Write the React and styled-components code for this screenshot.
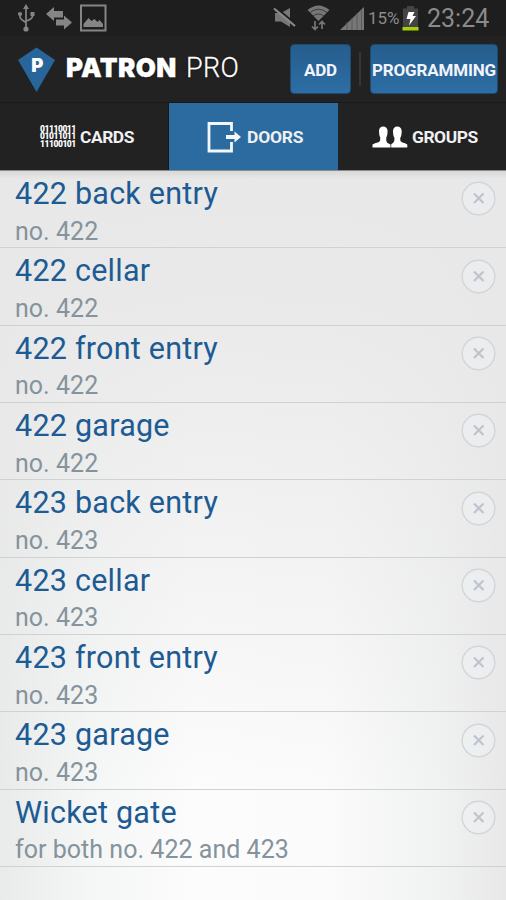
import React from 'react';
import styled, { createGlobalStyle } from 'styled-components';

const Global = createGlobalStyle`
  * { box-sizing: border-box; }
  body { margin: 0; background: #222; font-family: Roboto, "Liberation Sans", sans-serif; }
`;

const Screen = styled.div`
  width: 506px;
  height: 900px;
  display: flex;
  flex-direction: column;
  overflow: hidden;
`;

const StatusBar = styled.div`
  height: 36px;
  flex: none;
  background: #1e1e1e;
  display: flex;
  justify-content: space-between;
`;

const StatusIcons = styled.svg`
  display: block;
  flex: none;
`;

const StatusRight = styled.div`
  display: flex;
  height: 36px;
  align-items: center;
  color: #8b8b8b;
`;

const Percent = styled.span`
  width: 34px;
  font-size: 17px;
  letter-spacing: -0.1px;
  line-height: 36px;
`;

const Clock = styled.span`
  width: 86px;
  padding: 1px 0 0 7px;
  font-size: 25px;
  line-height: 36px;
  white-space: nowrap;
`;

const Header = styled.header`
  height: 67px;
  flex: none;
  background: #222;
  border-bottom: 1px solid #191919;
  display: flex;
  align-items: flex-start;
`;

const Logo = styled.svg`
  width: 40px;
  height: 46px;
  margin: 11px 10px 0 16px;
`;

const Title = styled.h1`
  margin: 0;
  width: 224px;
  display: flex;
  color: #fff;
  line-height: 64px;
  font-weight: 300;
  text-shadow: 0 0 2px #000;
`;

const Strong = styled.span`
  width: 120px;
  font-family: Inter, sans-serif;
  font-weight: 900;
  font-size: 26px;
  letter-spacing: 0.4px;
  -webkit-text-stroke: 0.4px #fff;
`;

const Light = styled.span`
  font-family: Roboto, sans-serif;
  font-weight: 300;
  font-size: 27px;
  line-height: 65px;
  letter-spacing: 0.3px;
  -webkit-text-stroke: 0.3px #fff;
`;

const Button = styled.button`
  width: ${(p) => p.$width}px;
  height: 50px;
  margin: 8px 0 0;
  padding: 2px 0 0;
  border: 1px solid #1d4a70;
  border-radius: 4px;
  background: linear-gradient(#265d8d, #2d6ea5);
  color: #f1f4fb;
  font: 700 17px Roboto, sans-serif;
  letter-spacing: -0.15px;
  white-space: nowrap;
  display: flex;
  align-items: center;
  justify-content: center;
`;

const Divider = styled.div`
  width: 2px;
  height: 34px;
  margin: 16px 9px 0 8px;
  background: #363636;
`;

const Tabs = styled.nav`
  height: 67px;
  flex: none;
  background: #222;
  display: grid;
  grid-template-columns: 169px 169px 168px;
`;

const Tab = styled.div`
  display: flex;
  align-items: center;
  padding-left: ${(p) => p.$inset}px;
  padding-top: 1px;
  gap: ${(p) => p.$gap}px;
  background: ${(p) => (p.$active ? '#2c6ba0' : '#222')};
  box-shadow: ${(p) => (p.$active ? '-1px 0 #191919' : 'none')};
  color: #f0f0f2;
  font-weight: 700;
  font-size: 17.4px;
  letter-spacing: ${(p) => p.$spacing}px;
`;

const Bits = styled.span`
  width: 36px;
  height: 23px;
  font: 900 8.5px/7.6px Roboto, sans-serif;
  letter-spacing: -0.45px;
  color: #fff;
  white-space: pre;
`;

const List = styled.main`
  flex: 1;
  border-top: 1px solid #8c8c8e;
  background:
    linear-gradient(rgba(0, 0, 0, 0.07), transparent 8px),
    linear-gradient(#e8e8e8 0%, rgba(232, 232, 232, 0.92) 18%, rgba(235, 235, 235, 0) 85%),
    linear-gradient(90deg, #e9eaea 0%, #f5f6f6 18%, #fcfcfc 38%, #fbfbfb 65%, #f1f2f2 86%, #e8e8e8 100%);
`;

const Row = styled.div`
  height: 77.33px;
  padding: 0 10px 0 15px;
  border-bottom: 1px solid #cfd1d2;
  display: flex;
  justify-content: space-between;
`;

const Name = styled.div`
  height: 43.6px;
  color: #1c5b93;
  font-size: 30.5px;
  line-height: 46px;
  letter-spacing: 0.24px;
  white-space: nowrap;
`;

const Detail = styled.div`
  height: 32px;
  color: #85939c;
  font-size: 25px;
  line-height: 34px;
  letter-spacing: 0.03px;
  white-space: nowrap;
`;

const Remove = styled.svg`
  width: 35px;
  height: 35px;
  margin-top: 10.3px;
`;

const doors = [
  ['422 back entry', 'no. 422'],
  ['422 cellar', 'no. 422'],
  ['422 front entry', 'no. 422'],
  ['422 garage', 'no. 422'],
  ['423 back entry', 'no. 423'],
  ['423 cellar', 'no. 423'],
  ['423 front entry', 'no. 423'],
  ['423 garage', 'no. 423'],
  ['Wicket gate', 'for both no. 422 and 423'],
];

const LeftIcons = () => (
  <StatusIcons width="120" height="36" viewBox="0 0 120 36">
    <g fill="none" stroke="#858585" strokeWidth="1.7">
      <path d="M26 7v21M20 13v4q0 2 6 5.500M32.500 13v3q0 3-6.500 5" />
    </g>
    <g fill="#858585">
      <path d="M26 4l3 5h-6z" />
      <circle cx="26" cy="29" r="2.600" />
      <circle cx="20" cy="14" r="2.100" />
      <path d="M30.500 12h4v4h-4z" />
      <path d="M46 14l8-7v4h9v6.500h-9v3.500z" />
      <path d="M72 22.500l-8-7v4h-8v6h8v4z" />
      <path d="M83.500 27v-3l5-6 3 3 3-2 3 3 2-2 3.500 4v3z" />
    </g>
    <path d="M81 5.500h24.500v25H81z" fill="none" stroke="#858585" strokeWidth="2" />
  </StatusIcons>
);

const SignalIcons = () => (
  <StatusIcons width="96" height="36" viewBox="272 0 96 36">
    <path d="M275 13h6l9-5v19l-9-5.500h-6z" fill="#777" />
    <path d="M275 7l22 18" stroke="#1e1e1e" strokeWidth="2" />
    <path d="M274 8.500l21 17.500" stroke="#8a8a8a" strokeWidth="2.200" />
    <path d="M307.500 10q11-9 22 0L318.500 21z" fill="#767676" />
    <path d="M310 12.500q8.500-6.500 17 0M313 16q5.500-4 11 0" fill="none" stroke="#3c3c3c" strokeWidth="1" />
    <path d="M315 21v8m-3-2.500l3 3 3-3M322 29v-7m-3 2.500l3-3 3 3" fill="none" stroke="#777" strokeWidth="1.700" />
    <path d="M340 30L364 7v23z" fill="#777" />
    <path d="M347 22v8M352 18v12M357 13v17M361.500 9v21" stroke="#5a5a5a" strokeWidth="1" />
  </StatusIcons>
);

const Battery = () => (
  <StatusIcons width="18" height="36" viewBox="402 0 18 36">
    <path d="M403 8.500h4V6h7v2.500h4v19h-15z" fill="#444" />
    <path d="M402.500 27H418.500v3.500h-16z" fill="#a4d007" />
    <path d="M408.500 12h6l-2 4h3.500l-7 9.500 1.500-6.500h-4z" fill="#fff" />
  </StatusIcons>
);

const DoorIcon = () => (
  <svg width="35" height="32" viewBox="0 0 35 32">
    <path d="M24.500 10V2.500H2V30h22.500V21" fill="none" stroke="#f3f6fa" strokeWidth="2.800" />
    <path d="M19 14h8.500V10.500l6.500 5.500-6.500 5.500V18H19z" fill="#f3f6fa" />
  </svg>
);

const GroupIcon = () => (
  <svg width="36" height="24" viewBox="0 0 36 24">
    <g fill="#fff">
      <path d="M.5 22.500v-3q2-1.200 6-2.200Q8.700 16 8.300 13 7 11 7 6 7.200 1.500 11.200 1.500T15.600 6q0 5-1.400 7-.2 3.500 1 4.800l3.300 1.700v3z" />
      <path d="M19.200 22.500v-3.300l2-1.500q1.500-1.300 1.300-4.700-1.500-2-1.500-7 .3-4.500 4.300-4.500T29.700 6q0 5-1.500 7-.4 3 1.600 4.300 3.700 1 5.500 2.200v3z" />
    </g>
  </svg>
);

export default function App() {
  return (
    <Screen>
      <Global />
      <StatusBar>
        <LeftIcons />
        <StatusRight>
          <SignalIcons />
          <Percent>15%</Percent>
          <Battery />
          <Clock>23:24</Clock>
        </StatusRight>
      </StatusBar>
      <Header>
        <Logo viewBox="16 47 40 46">
          <path d="M36.500 47.500L55 60 36.500 92 18 60z" fill="#28659a" />
          <text x="37.300" y="71.500" textAnchor="middle" fontFamily="Inter" fontWeight="900" fontSize="18.500" fill="#fff">P</text>
        </Logo>
        <Title>
          <Strong>PATRON</Strong>
          <Light>PRO</Light>
        </Title>
        <Button $width={61}>ADD</Button>
        <Divider />
        <Button $width={128}>PROGRAMMING</Button>
      </Header>
      <Tabs>
        <Tab $inset={40} $gap={4} $spacing={-0.45}>
          <Bits>{'01110011\n01011011\n11100101'}</Bits>
          CARDS
        </Tab>
        <Tab $active $inset={38} $gap={5} $spacing={-0.15}>
          <DoorIcon />
          DOORS
        </Tab>
        <Tab $inset={34} $gap={4} $spacing={-0.45}>
          <GroupIcon />
          GROUPS
        </Tab>
      </Tabs>
      <List>
        {doors.map(([name, detail]) => (
          <Row key={name}>
            <div>
              <Name>{name}</Name>
              <Detail>{detail}</Detail>
            </div>
            <Remove viewBox="0 0 35 35">
              <circle cx="17.500" cy="17.500" r="16.300" fill="#eff2f4" fillOpacity="0.400" stroke="#d0d6da" strokeWidth="1.400" />
              <path d="M13 12.500l9.500 9.500M22.500 12.500L13 22" stroke="#bcc4ce" strokeWidth="2.200" />
            </Remove>
          </Row>
        ))}
      </List>
    </Screen>
  );
}
